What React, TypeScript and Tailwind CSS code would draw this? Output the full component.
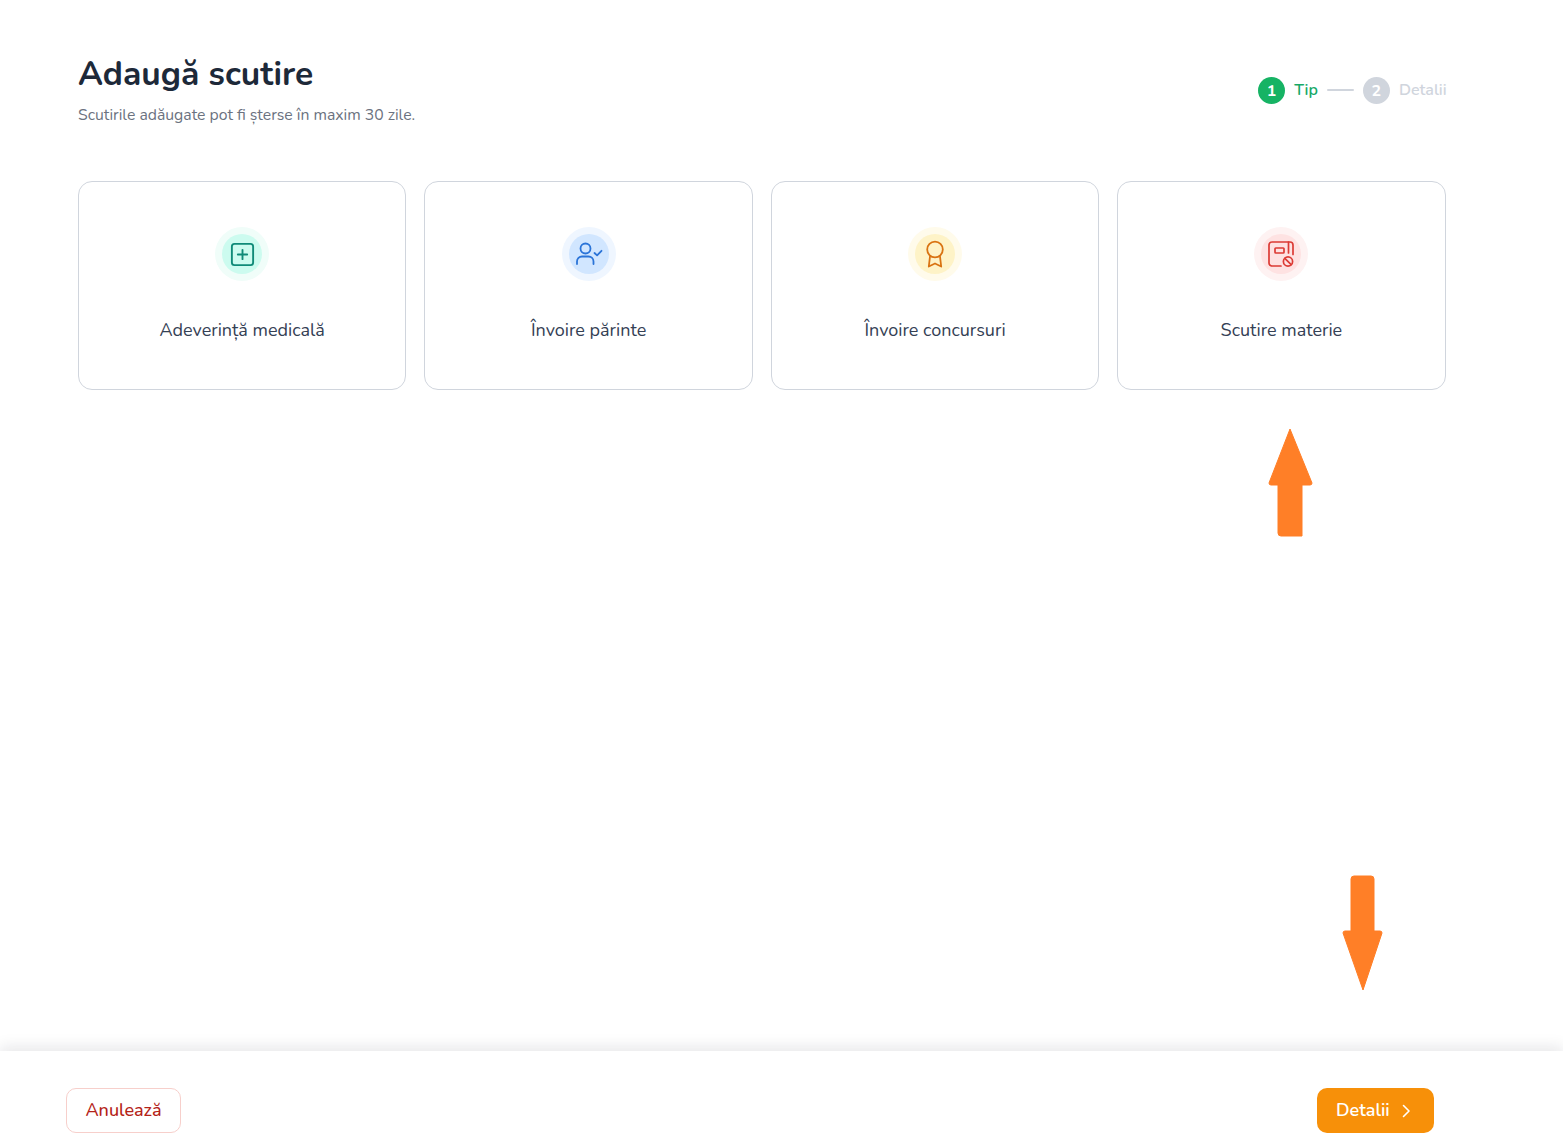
const font = { fontFamily: '"Nunito", Lato, "Noto Sans", sans-serif' };

function PlusIcon() {
  return (
    <svg width="25" height="25" viewBox="0 0 24 24" fill="none" stroke="#0f8a78" strokeWidth="1.8" strokeLinecap="round" strokeLinejoin="round">
      <rect x="1.8" y="1.8" width="20.4" height="20.4" rx="2.5" />
      <path d="M12 7.5v9M7.5 12h9" />
    </svg>
  );
}
function UserIcon() {
  return (
    <svg width="28" height="24" viewBox="0 0 28 24" fill="none" stroke="#2b74d8" strokeWidth="1.8" strokeLinecap="round" strokeLinejoin="round">
      <circle cx="10.5" cy="6.5" r="5" />
      <path d="M2 22v-2.5a5 5 0 0 1 5-5h6.5a5 5 0 0 1 5 5V22" />
      <path d="M19.5 11l2.6 2.4 4.4-4.6" />
    </svg>
  );
}
function AwardIcon() {
  return (
    <svg width="20" height="28" viewBox="0 0 20 28" fill="none" stroke="#d97311" strokeWidth="1.8" strokeLinecap="round" strokeLinejoin="round">
      <circle cx="10" cy="9.5" r="7.8" />
      <path d="M5 16.5l-1.2 10L10 23.5l6.2 3-1.2-10" />
    </svg>
  );
}
function SubjectIcon() {
  return (
    <svg width="26" height="26" viewBox="0 0 26 26" fill="none" stroke="#dc3b35" strokeWidth="1.7" strokeLinecap="round" strokeLinejoin="round">
      <path d="M13 25H4a3 3 0 0 1-3-3V4a3 3 0 0 1 3-3h18a3 3 0 0 1 3 3v9.5" />
      <path d="M20.5 1v11" />
      <rect x="7" y="7" width="9" height="5" rx="0.8" />
      <circle cx="20" cy="20.5" r="4.6" />
      <path d="M16.8 17.3l6.4 6.4" />
    </svg>
  );
}

const cards = [
  { label: "Adeverință medicală", outer: "bg-[#f0fdf9]", inner: "bg-[#ccfbef]", icon: <PlusIcon /> },
  { label: "Învoire părinte", outer: "bg-[#eff6ff]", inner: "bg-[#d1e6ff]", icon: <UserIcon /> },
  { label: "Învoire concursuri", outer: "bg-[#fffbeb]", inner: "bg-[#fef3c7]", icon: <AwardIcon /> },
  { label: "Scutire materie", outer: "bg-[#fef2f2]", inner: "bg-[#fee2e2]", icon: <SubjectIcon /> },
];

export default function App() {
  return (
    <div className="relative flex h-[1147px] w-[1563px] flex-col overflow-hidden bg-white" style={font}>
      <main className="flex-1 pl-[78px] pr-[117.4px] pt-[52px]">
        <header className="flex items-start justify-between">
          <div>
            <h1 className="text-[33.6px] font-bold leading-[44px] text-[#1d2939]">Adaugă scutire</h1>
            <p className="mt-[8px] text-[15.75px] leading-[22px] text-[#6b7280]">Scutirile adăugate pot fi șterse în maxim 30 zile.</p>
          </div>
          <div className="-mr-px mt-[25px] flex items-center text-[16px] font-semibold">
            <span className="flex h-[27px] w-[27px] items-center justify-center rounded-full bg-[#16b364] text-[16px] font-bold text-white">1</span>
            <span className="ml-[9px] -translate-y-px text-[#16a866]">Tip</span>
            <span className="ml-[9px] mr-[9px] h-[2px] w-[27px] -translate-y-px rounded bg-[#d0d5dd]" />
            <span className="flex h-[27px] w-[27px] items-center justify-center rounded-full bg-[#d0d5dd] text-[16px] font-bold text-white">2</span>
            <span className="ml-[9px] -translate-y-px text-[#d0d5dd]">Detalii</span>
          </div>
        </header>
        <section className="mt-[55px] grid grid-cols-4 gap-[18px]">
          {cards.map((c) => (
            <div key={c.label} className="flex h-[209px] flex-col items-center rounded-[14px] border border-[#d0d5dd] bg-white pt-[45px]">
              <div className={`flex h-[54px] w-[54px] items-center justify-center rounded-full ${c.outer}`}>
                <div className={`flex h-[40px] w-[40px] items-center justify-center rounded-full ${c.inner}`}>{c.icon}</div>
              </div>
              <span className="mt-[37px] text-[18px] leading-[24px] text-[#344054]">{c.label}</span>
            </div>
          ))}
        </section>
      </main>
      <footer className="flex h-[96px] items-center justify-between bg-white pl-[66px] pr-[129px] pt-[23px] shadow-[0_-4px_14px_rgba(16,24,40,0.1)]">
        <button className="flex h-[45px] w-[115px] items-center justify-center rounded-[10px] border border-[#f7cfcb] bg-white text-[18px] font-medium text-[#b42318]">Anulează</button>
        <button className="flex h-[45px] w-[117px] items-center gap-[12px] rounded-[10px] bg-[#f79009] pl-[19px] text-[18px] font-semibold text-white">
          Detalii
          <svg width="9" height="14" viewBox="0 0 9 14" fill="none" stroke="white" strokeWidth="1.6" strokeLinecap="round" strokeLinejoin="round"><path d="M1.5 1.5L7 7l-5.5 5.5" /></svg>
        </button>
      </footer>
      <svg className="absolute left-[1268px] top-[428px]" width="45" height="109" viewBox="0 0 45 109" fill="#ff7f27">
        <path d="M22 1 L44 55 Q44 57 42 57 H34 V108 H13 Q10 108 10 105 V57 H3 Q1 57 1 55 Z" stroke="#ff7f27" strokeLinejoin="round" />
      </svg>
      <svg className="absolute left-[1342px] top-[875px]" width="41" height="116" viewBox="0 0 41 116" fill="#ff7f27">
        <path d="M12 1 H29 Q32 1 32 4 V56 H38 Q40 56 40 58 L21 115 L1 58 Q1 56 3 56 H9 V4 Q9 1 12 1 Z" stroke="#ff7f27" strokeLinejoin="round" />
      </svg>
    </div>
  );
}
